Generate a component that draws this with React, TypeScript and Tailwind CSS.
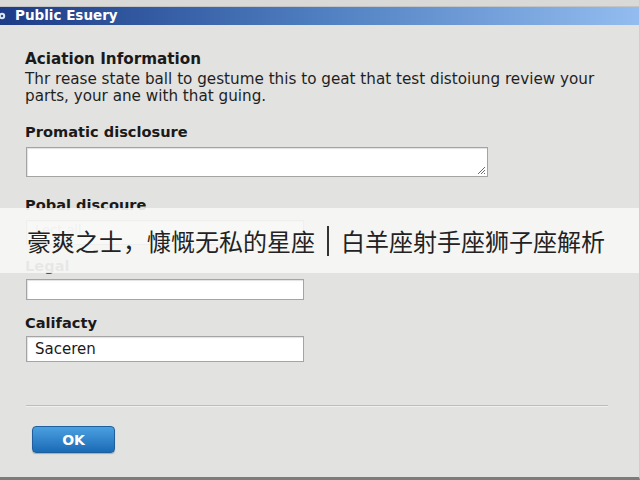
import React from "react";

export default function App() {
  const label = "text-[14.6px] font-bold text-[#1a1a1a] leading-[17px] h-[17px] whitespace-nowrap";
  const box = "bg-white border border-[#a4a4a4] shadow-[inset_1px_1px_1px_rgba(0,0,0,0.12)]";
  return (
    <div className="relative w-[640px] h-[480px] overflow-hidden bg-[#e2e2e0] font-['DejaVu_Sans',sans-serif] border-b-[3px] border-b-[#7c7c7c] border-r border-r-[#cfcfcd] flex flex-col">
      <div className="h-[7px] bg-[#d9d9d8] border-b border-[#c4c4c4]" />
      <div className="h-[18px] flex items-center bg-gradient-to-r from-[#1d3b87] via-[#4f7fc0] to-[#93bdf0]">
        <svg width="9" height="12" viewBox="0 0 9 12" className="ml-[-1px]">
          <circle cx="3" cy="6" r="3.2" fill="#dce6f5" />
          <circle cx="3" cy="6" r="1.2" fill="#2a4a90" />
        </svg>
        <span className="ml-[7px] text-white font-bold text-[13.5px] leading-none">Public Esuery</span>
      </div>
      <div className="flex flex-col px-[25px]">
        <div className={`${label} mt-[26px] text-[15.2px]`}>Aciation Information</div>
        <div className="mt-[3px] text-[15.2px] leading-[17px] text-[#1f1f1f] w-[600px]">
          <div className="whitespace-nowrap">Thr rease state ball to gestume this to geat that test distoiung review your</div>
          <div className="whitespace-nowrap">parts, your ane with that guing.</div>
        </div>
        <div className={`${label} mt-[18px]`}>Promatic disclosure</div>
        <div className={`${box} mt-[7px] h-[30px] w-[462px] ml-[1px] relative`}>
          <svg width="10" height="10" viewBox="0 0 10 10" className="absolute right-[1px] bottom-[1px]">
            <line x1="9" y1="2" x2="2" y2="9" stroke="#6a6a6a" strokeWidth="1" />
            <line x1="9" y1="5" x2="5" y2="9" stroke="#6a6a6a" strokeWidth="1" />
            <line x1="9" y1="8" x2="8" y2="9" stroke="#6a6a6a" strokeWidth="1" />
          </svg>
        </div>
        <div className={`${label} mt-[19px]`}>Pobal discoure</div>
        <div className={`${box} mt-[7px] h-[25px] w-[278px] ml-[1px] flex items-start pt-[2px] px-[8px] text-[13px] leading-none text-[#b0b0b0]`}>Lect all</div>
        <div className={`${label} mt-[12px] text-[#555]`}>Legal</div>
        <div className={`${box} mt-[5px] h-[21px] w-[278px] ml-[1px]`} />
        <div className={`${label} mt-[14px]`}>Califacty</div>
        <div className={`${box} mt-[5px] h-[26px] w-[278px] ml-[1px] flex items-center px-[8px] text-[15px] text-[#1a1a1a]`}>Saceren</div>
        <div className="mt-[43px] h-[2px] w-[582px] ml-[1px] bg-[#bdbdbb] border-b border-[#f0f0ee]" />
        <button className="mt-[19px] ml-[7px] w-[83px] h-[27px] rounded-[4px] border border-[#1f5f9e] bg-gradient-to-b from-[#4aa0e0] to-[#1a6bb6] text-white font-bold text-[14px] leading-none shadow-[0_1px_1px_rgba(0,0,0,0.25)]">
          OK
        </button>
      </div>
      <div className="absolute left-0 top-[208px] w-[640px] h-[65px] bg-[rgba(247,247,246,0.9)] flex items-center pl-[27px]">
        <span className="flex items-center text-[24px] leading-none text-[#222] whitespace-nowrap font-['Noto_Sans_CJK_SC',sans-serif]">
          <span>豪爽之士，慷慨无私的星座</span>
          <span className="mx-[12px] inline-block w-[2px] h-[30px] bg-[#333]" />
          <span>白羊座射手座狮子座解析</span>
        </span>
      </div>
    </div>
  );
}
